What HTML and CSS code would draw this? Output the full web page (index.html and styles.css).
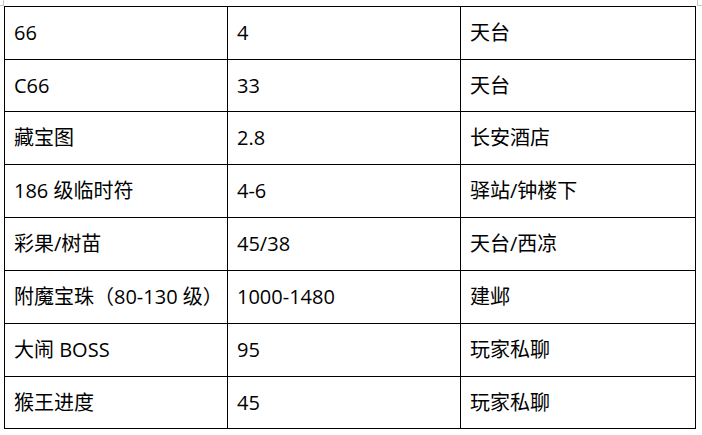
FILE: index.html
```html
<!DOCTYPE html>
<html lang="zh-CN">
<head>
<meta charset="utf-8">
<title>价格表</title>
<link rel="stylesheet" href="styles.css">
</head>
<body>
<div class="page">
  <span class="corner corner-left"></span>
  <span class="corner corner-right"></span>
  <table class="price-table">
    <colgroup>
      <col class="c1"><col class="c2"><col class="c3">
    </colgroup>
    <tbody>
      <tr class="r53"><td>66</td><td>4</td><td>天台</td></tr>
      <tr class="r52"><td>C66</td><td>33</td><td>天台</td></tr>
      <tr class="r53"><td>藏宝图</td><td>2.8</td><td>长安酒店</td></tr>
      <tr class="r53"><td>186 级临时符</td><td>4-6</td><td>驿站/钟楼下</td></tr>
      <tr class="r53"><td>彩果/树苗</td><td>45/38</td><td>天台/西凉</td></tr>
      <tr class="r53"><td>附魔宝珠（80-130 级）</td><td>1000-1480</td><td>建邺</td></tr>
      <tr class="r53"><td>大闹 BOSS</td><td>95</td><td>玩家私聊</td></tr>
      <tr class="r52"><td>猴王进度</td><td>45</td><td>玩家私聊</td></tr>
    </tbody>
  </table>
</div>
</body>
</html>
```

FILE: styles.css
```css
html, body {
  margin: 0;
  padding: 0;
  background: #ffffff;
}

.page {
  position: relative;
  width: 702px;
  height: 435px;
  padding: 6px 0 0 4px;
  box-sizing: border-box;
}

.corner {
  position: absolute;
  top: 0;
  width: 4px;
  height: 5px;
  border-color: #c8c8c8;
  border-style: solid;
  border-width: 0;
}

.corner-left {
  left: 0;
  border-right-width: 1px;
  border-bottom-width: 1px;
  width: 3px;
}

.corner-right {
  left: 697px;
  border-left-width: 1px;
  border-bottom-width: 1px;
}

.price-table {
  border-collapse: collapse;
  table-layout: fixed;
  width: 691px;
  font-family: "Open Sans", "Noto Sans CJK SC", sans-serif;
  font-size: 20px;
  color: #000000;
}

.c1 { width: 223px; }
.c2 { width: 233px; }
.c3 { width: 235px; }

.price-table td {
  border: 1px solid #000000;
  padding: 0 0 0 9px;
  vertical-align: middle;
  white-space: nowrap;
  line-height: 24px;
}

.r53 { height: 53px; }
.r52 { height: 52px; }
```
